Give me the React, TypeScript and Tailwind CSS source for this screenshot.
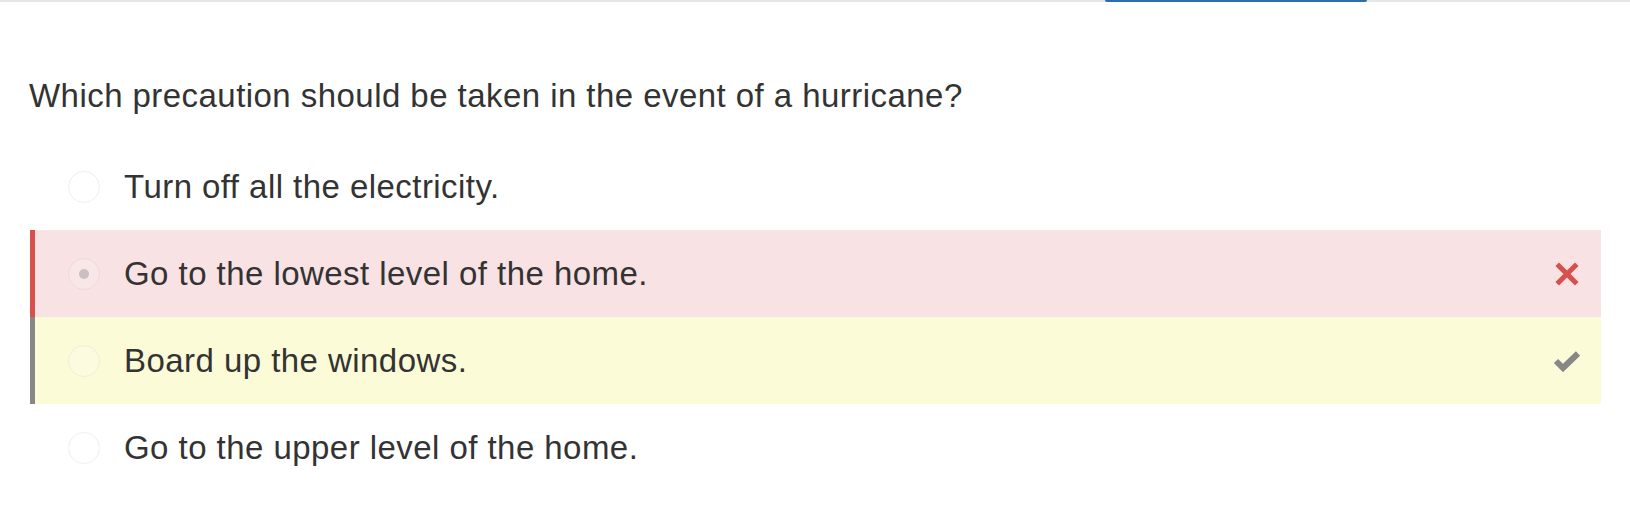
import { useState } from "react";

type Choice = {
  id: number;
  label: string;
  status?: "wrong" | "correct";
};

const choices: Choice[] = [
  { id: 1, label: "Turn off all the electricity." },
  { id: 2, label: "Go to the lowest level of the home.", status: "wrong" },
  { id: 3, label: "Board up the windows.", status: "correct" },
  { id: 4, label: "Go to the upper level of the home." },
];

function CrossIcon() {
  return (
    <svg width="24" height="24" viewBox="0 0 24 24">
      <path
        d="M4 4 L20 20 M20 4 L4 20"
        stroke="#d6504d"
        strokeWidth="5"
        strokeLinecap="square"
        fill="none"
      />
    </svg>
  );
}

function CheckIcon() {
  return (
    <svg width="28" height="22" viewBox="0 0 28 22">
      <path
        d="M3 11 L10 18 L25 3.5"
        stroke="#878787"
        strokeWidth="6"
        fill="none"
      />
    </svg>
  );
}

export default function App() {
  const [selected] = useState<number>(2);

  return (
    <div
      className="w-[1630px] h-[526px] bg-white text-[#333333] overflow-hidden"
      style={{ fontFamily: '"Liberation Sans", Arial, sans-serif' }}
    >
      <div className="h-[2px] bg-[#e6e6e6] flex">
        <div className="ml-[1105px] w-[262px] h-[2px] bg-[#2d6cae] rounded-b-[3px]" />
      </div>

      <div className="pl-[29px] pt-[76px]">
        <p className="text-[33px] leading-[36px] tracking-[0.45px]">
          Which precaution should be taken in the event of a hurricane?
        </p>

        <ul className="mt-[29px] w-[1571px] ml-[1px]">
          {choices.map((c) => (
            <li
              key={c.id}
              className={
                "h-[87px] flex items-center border-l-[5px] " +
                (c.status === "wrong"
                  ? "bg-[#f8e2e3] border-[#d6504d]"
                  : c.status === "correct"
                    ? "bg-[#fcfbd8] border-[#878787]"
                    : "border-transparent")
              }
            >
              <span
                className={
                  "ml-[33px] w-[32px] h-[32px] rounded-full border flex items-center justify-center shrink-0 " +
                  (c.status === "wrong"
                    ? "border-[#efdadb] bg-[#f9e7e8]"
                    : c.status === "correct"
                      ? "border-[#f1f0d6] bg-[#fcfbe0]"
                      : "border-[#efefef] bg-white")
                }
              >
                {selected === c.id && (
                  <span className="w-[10px] h-[10px] rounded-full bg-[#cbbfc1]" />
                )}
              </span>
              <span className="ml-[24px] text-[33px] leading-[36px] tracking-[0.45px]">
                {c.label}
              </span>
              <span className="ml-auto mr-[20px] w-[28px] flex justify-center">
                {c.status === "wrong" && <CrossIcon />}
                {c.status === "correct" && <CheckIcon />}
              </span>
            </li>
          ))}
        </ul>
      </div>
    </div>
  );
}
